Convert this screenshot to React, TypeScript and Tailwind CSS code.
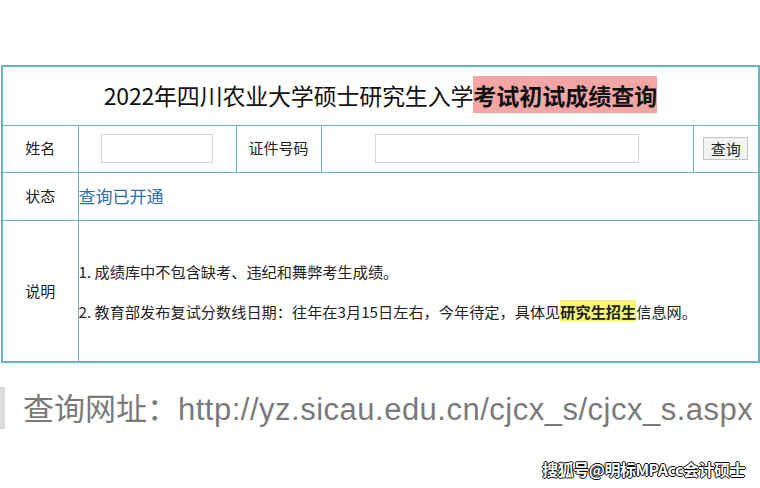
import React from 'react';

const cjk = "font-['Noto_Sans_CJK_SC','Noto_Sans',sans-serif]";

const LabelCell: React.FC<{ children: React.ReactNode }> = ({ children }) => (
    <td className="border border-[#6ab3bf] text-center text-[15px] text-[#222]">{children}</td>
);

const App: React.FC = () => {
    return (
        <div className={`w-[760px] h-[488px] bg-white overflow-hidden ${cjk}`}>
            <div className="pt-[65px] pl-[1px]">
                <table className="w-[757px] border-collapse border-2 border-[#6ab3bf] table-fixed">
                    <colgroup>
                        <col className="w-[76px]" />
                        <col className="w-[158px]" />
                        <col className="w-[85px]" />
                        <col className="w-[372px]" />
                        <col className="w-[66px]" />
                    </colgroup>
                    <tbody>
                        <tr className="h-[59px]">
                            <td colSpan={5} className="border border-[#6ab3bf] text-center text-[23px] text-[#111] leading-none">
                                <span className="tracking-[-0.2px]">2022年四川农业大学硕士研究生入学</span>
                                <span className="font-bold bg-[#f3a6a6] pt-[2px] pb-[1px]">考试初试成绩查询</span>
                            </td>
                        </tr>
                        <tr className="h-[47px]">
                            <LabelCell>姓名</LabelCell>
                            <td className="border border-[#6ab3bf]">
                                <div className="flex justify-center">
                                    <div className="w-[112px] h-[29px] border border-[#d4d4d4] bg-white" />
                                </div>
                            </td>
                            <LabelCell>证件号码</LabelCell>
                            <td className="border border-[#6ab3bf]">
                                <div className="flex justify-center">
                                    <div className="w-[264px] h-[29px] border border-[#d4d4d4] bg-white" />
                                </div>
                            </td>
                            <td className="border border-[#6ab3bf]">
                                <div className="flex justify-center">
                                    <button className="w-[45px] h-[23px] border border-[#c4c4c4] bg-[#f3f3f3] text-[15px] leading-none text-[#222]">查询</button>
                                </div>
                            </td>
                        </tr>
                        <tr className="h-[48px]">
                            <LabelCell>状态</LabelCell>
                            <td colSpan={4} className="border border-[#6ab3bf] text-[17px] text-[#2a6db3]">查询已开通</td>
                        </tr>
                        <tr className="h-[142px]">
                            <LabelCell>说明</LabelCell>
                            <td colSpan={4} className="border border-[#6ab3bf] text-[15.2px] text-[#222]">
                                <div className="flex flex-col gap-[18px]">
                                    <p className="leading-[22px]">1. 成绩库中不包含缺考、违纪和舞弊考生成绩。</p>
                                    <p className="leading-[22px]">
                                        2. 教育部发布复试分数线日期：往年在3月15日左右，今年待定，具体见
                                        <span className="font-bold bg-[#f7f77c]">研究生招生</span>
                                        信息网。
                                    </p>
                                </div>
                            </td>
                        </tr>
                    </tbody>
                </table>
            </div>

            <div className="mt-[24px] flex items-center h-[42px]">
                <div className="w-[5px] h-[42px] bg-[#dcdcdc]" />
                <p className="ml-[18px] text-[31px] leading-none text-[#7a7a7a] whitespace-nowrap">
                    查询网址：<span className="font-['Liberation_Sans',sans-serif] tracking-[0.5px]">http://yz.sicau.edu.cn/cjcx_s/cjcx_s.aspx</span>
                </p>
            </div>

            <div className="mt-[32px] flex justify-end pr-[15px]">
                <span className="text-[16px] font-bold leading-none text-white tracking-[-0.5px] [text-shadow:1px_0_0_#000,-1px_0_0_#000,0_1px_0_#000,0_-1px_0_#000]">
                    搜狐号@明标MPAcc会计硕士
                </span>
            </div>
        </div>
    );
};

export default App;
